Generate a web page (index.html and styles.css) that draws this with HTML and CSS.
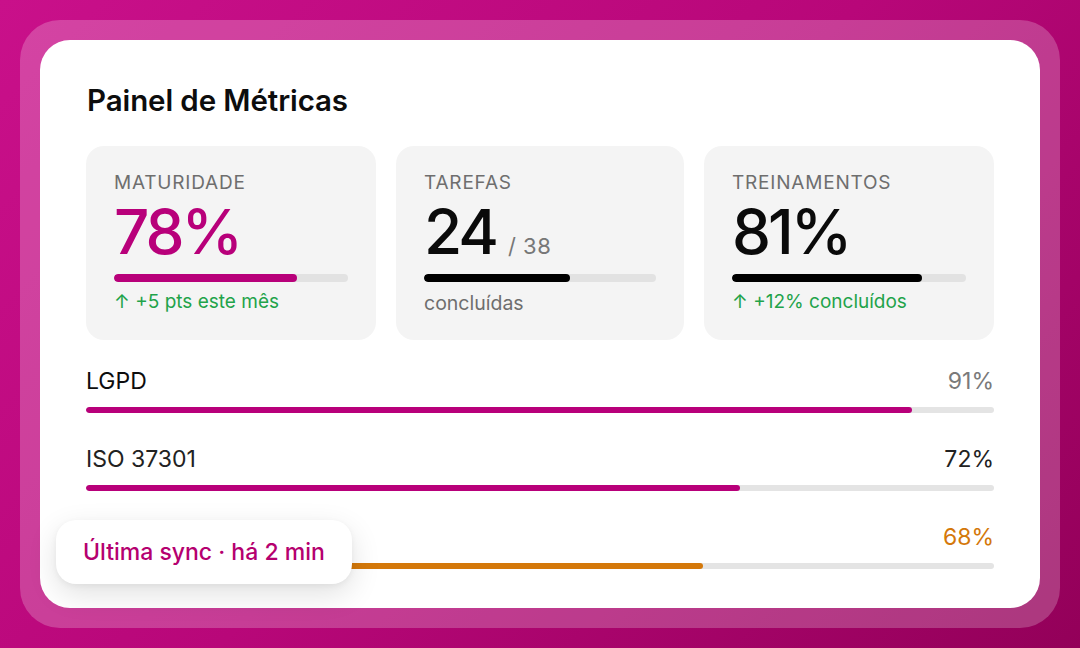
FILE: index.html
```html
<!DOCTYPE html>
<html lang="pt-BR">
<head>
<meta charset="utf-8">
<title>Painel de Métricas</title>
<link rel="stylesheet" href="styles.css">
</head>
<body>
<div class="stage">
  <div class="frame">
    <main class="panel">
      <h1 class="title">Painel de Métricas</h1>

      <section class="stats">
        <article class="stat">
          <div class="stat-label">MATURIDADE</div>
          <div class="stat-value accent">78%</div>
          <div class="meter"><div class="meter-fill accent-bg" style="width:78%"></div></div>
          <div class="stat-note up">↑ +5 pts este mês</div>
        </article>
        <article class="stat">
          <div class="stat-label">TAREFAS</div>
          <div class="stat-value">24<span class="stat-total">/ 38</span></div>
          <div class="meter"><div class="meter-fill dark-bg" style="width:63%"></div></div>
          <div class="stat-note muted">concluídas</div>
        </article>
        <article class="stat">
          <div class="stat-label">TREINAMENTOS</div>
          <div class="stat-value">81%</div>
          <div class="meter"><div class="meter-fill dark-bg" style="width:81%"></div></div>
          <div class="stat-note up">↑ +12% concluídos</div>
        </article>
      </section>

      <section class="rows">
        <div class="row">
          <div class="row-head">
            <span class="row-name">LGPD</span>
            <span class="row-pct grey">91%</span>
          </div>
          <div class="track"><div class="track-fill accent-bg" style="width:91%"></div></div>
        </div>
        <div class="row">
          <div class="row-head">
            <span class="row-name soft">ISO 37301</span>
            <span class="row-pct soft">72%</span>
          </div>
          <div class="track"><div class="track-fill accent-bg" style="width:72%"></div></div>
        </div>
        <div class="row">
          <div class="row-head">
            <span class="row-name"></span>
            <span class="row-pct orange">68%</span>
          </div>
          <div class="track"><div class="track-fill orange-bg" style="width:68%"></div></div>
        </div>
      </section>

      <div class="sync-badge">Última sync · há 2 min</div>
    </main>
  </div>
</div>
</body>
</html>
```

FILE: styles.css
```css
* { box-sizing: border-box; }

html, body {
  margin: 0;
  height: 100%;
}

body {
  font-family: "Inter", "Liberation Sans", sans-serif;
  color: #111;
}

.stage {
  width: 1080px;
  height: 648px;
  padding: 20px;
  background: linear-gradient(135deg, #c9108a 0%, #b80779 50%, #930059 100%);
}

.frame {
  height: 100%;
  padding: 20px;
  border-radius: 40px;
  background: rgba(255, 255, 255, 0.22);
}

.panel {
  position: relative;
  height: 100%;
  padding: 40px 46px 0 46px;
  border-radius: 30px;
  background: #fff;
}

.title {
  margin: 0 0 26px 1px;
  font-size: 29.5px;
  font-weight: 600;
  line-height: 40px;
  letter-spacing: -0.1px;
  color: #0d0d0d;
}

/* stat cards */
.stats {
  display: grid;
  grid-template-columns: 290px 288px 290px;
  gap: 20px;
}

.stat {
  height: 194px;
  padding: 25px 28px 0 28px;
  border-radius: 18px;
  background: #f4f4f4;
}

.stat-label {
  font-size: 19px;
  line-height: 23px;
  letter-spacing: 0.8px;
  color: #6e6e6e;
}

.stat-value {
  font-size: 62px;
  font-weight: 500;
  line-height: 75px;
  letter-spacing: -3px;
  color: #0a0a0a;
}

.stat-value.accent { color: #b8007a; }

.stat-total {
  margin-left: 12px;
  font-size: 22px;
  font-weight: 400;
  line-height: 1;
  letter-spacing: 0.5px;
  color: #777;
}

.meter {
  margin-top: 5px;
  height: 8px;
  border-radius: 4px;
  background: #e2e2e2;
  overflow: hidden;
}

.meter-fill {
  height: 100%;
  border-radius: 4px;
}

.stat-note {
  margin-top: 8px;
  font-size: 19px;
  line-height: 24px;
}

.stat-note.up { color: #1fa34a; }
.stat-note.muted { color: #6e6e6e; margin-top: 9px; font-size: 19.5px; }

.accent-bg { background: #b8007a; }
.dark-bg { background: #000; }
.orange-bg { background: #d4780a; }

/* compliance rows */
.rows {
  display: flex;
  flex-direction: column;
  gap: 32px;
  margin-top: 27px;
}

.row-head {
  display: flex;
  justify-content: space-between;
  align-items: center;
  height: 28px;
  font-size: 23px;
}

.row-name { color: #0d0d0d; }
.row-name.soft, .row-pct.soft { color: #222; }
.row-pct.grey { color: #7a7a7a; }
.row-pct.orange { color: #d4780a; }

.track {
  margin-top: 12px;
  height: 6px;
  border-radius: 3px;
  background: #e4e4e4;
  overflow: hidden;
}

.track-fill {
  height: 100%;
  border-radius: 3px;
}

/* floating sync pill */
.sync-badge {
  position: absolute;
  left: 16px;
  bottom: 24px;
  height: 64px;
  padding: 0 27px;
  display: flex;
  align-items: center;
  border-radius: 20px;
  background: #fff;
  box-shadow: 0 10px 30px rgba(0, 0, 0, 0.12), 0 2px 6px rgba(0, 0, 0, 0.05);
  font-size: 23px;
  font-weight: 500;
  letter-spacing: 0;
  color: #b5006f;
}
```
